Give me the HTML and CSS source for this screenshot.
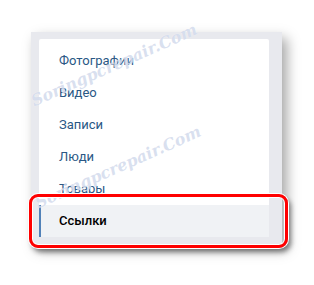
FILE: index.html
```html
<!DOCTYPE html>
<html lang="ru">
<head>
<meta charset="utf-8">
<title>Меню</title>
<link rel="stylesheet" href="styles.css">
</head>
<body>
<div class="stage">
  <div class="frame">
    <ul class="menu">
      <li class="item">Фотографии</li>
      <li class="item">Видео</li>
      <li class="item">Записи</li>
      <li class="item">Люди</li>
      <li class="item">Товары</li>
      <li class="item selected">Ссылки</li>
    </ul>
  </div>
  <div class="mark mark-top">Soringpcrepair.Com</div>
  <div class="mark mark-bottom">Soringpcrepair.Com</div>
  <div class="highlight"></div>
</div>
</body>
</html>
```
FILE: styles.css
```css
html, body {
  margin: 0;
  padding: 0;
  background: #ffffff;
}
.stage {
  position: relative;
  width: 314px;
  height: 285px;
  padding: 32px 0 0 31px;
  box-sizing: border-box;
  font-family: Roboto, "Liberation Sans", Arial, sans-serif;
}
.frame {
  width: 251px;
  box-sizing: border-box;
  padding: 7px 13px 7px 8px;
  background: #e8e9ee;
  box-shadow: 5px 6px 12px rgba(0, 0, 0, 0.35);
}
.menu {
  list-style: none;
  margin: 0;
  padding: 6px 0 0 0;
  background: #ffffff;
  border-radius: 2px;
}
.item {
  height: 32px;
  line-height: 32px;
  padding-left: 20px;
  font-size: 13px;
  color: #2a5885;
}
.item.selected {
  background: #f0f2f5;
  border-left: 2px solid #5181b8;
  padding-left: 18px;
  color: #000000;
  font-weight: 500;
}
.mark {
  position: absolute;
  font-family: "DejaVu Serif", serif;
  font-style: italic;
  font-weight: bold;
  font-size: 16px;
  color: rgba(185, 198, 226, 0.55);
  text-shadow: 0 0 1px rgba(255, 255, 255, 0.8);
  white-space: nowrap;
  transform-origin: left center;
  pointer-events: none;
}
.mark-top {
  left: 32px;
  top: 92px;
  transform: rotate(-24deg);
}
.mark-bottom {
  left: 36px;
  top: 194px;
  transform: rotate(-24deg);
}
.highlight {
  position: absolute;
  left: 29px;
  top: 194px;
  width: 259px;
  height: 54px;
  box-sizing: border-box;
  border: 3px solid #ff0000;
  border-radius: 9px;
  box-shadow: inset 0 0 0 1px #ffffff, 0 0 0 1px #ffffff, 3px 4px 5px rgba(0, 0, 0, 0.45);
}
```
